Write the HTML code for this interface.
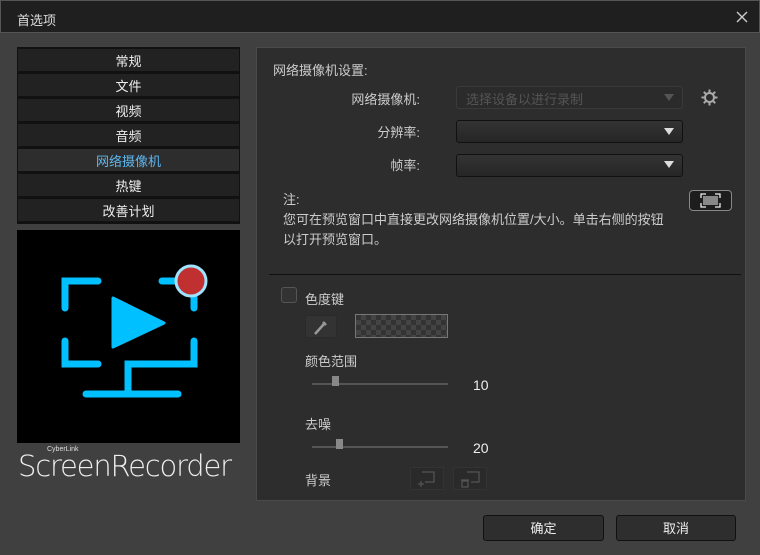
<!DOCTYPE html>
<html><head><meta charset="utf-8"><style>
*{box-sizing:border-box;margin:0;padding:0}
body{width:760px;height:555px;background:#404040;font-family:"Liberation Sans","Noto Sans CJK SC",sans-serif;font-size:13px;color:#d0d0d0;position:relative;overflow:hidden}
.a{position:absolute}
.title{left:0;top:0;width:760px;height:33px;background:#1f1f1f;border:1px solid #555;border-bottom:1px solid #555}
.nav{left:17px;width:223px;height:24px;background:#222;border:1px solid #111;color:#eee;text-align:center;line-height:25px;font-size:13px}
.panel{left:256px;top:47px;width:490px;height:454px;background:#2d2d2d;border:1px solid #4a4a4a}
.sel{height:23px;border:1px solid #111;border-radius:3px;background:linear-gradient(#333,#262626)}
.tri{width:0;height:0;border-left:5px solid transparent;border-right:5px solid transparent;border-top:7px solid #ddd}
.lbl{text-align:right;width:120px;color:#ccc}
.btn{height:26px;border:1px solid #111;border-radius:3px;background:#2e2e2e;color:#eee;text-align:center;line-height:26px}
</style></head><body>
<div class="a title"></div>
<div class="a" style="left:17px;top:10px;color:#ddd;font-size:13px">首选项</div>
<svg class="a" style="left:736px;top:11px" width="12" height="12"><path d="M1 1L11 11M11 1L1 11" stroke="#ccc" stroke-width="1.4"/></svg>
<div class="a" style="left:17px;top:47px;width:223px;height:177px;background:#111"></div>
<div class="a nav" style="top:48px">常规</div>
<div class="a nav" style="top:73px">文件</div>
<div class="a nav" style="top:98px">视频</div>
<div class="a nav" style="top:123px">音频</div>
<div class="a nav" style="top:148px;background:#2d2d2d;color:#5fb6ee">网络摄像机</div>
<div class="a nav" style="top:173px">热键</div>
<div class="a nav" style="top:198px">改善计划</div>
<svg class="a" style="left:17px;top:230px" width="223" height="213" viewBox="17 230 223 213">
<rect x="17" y="230" width="223" height="213" fill="#000"/>
<g stroke="#00c0ff" stroke-width="7" stroke-linecap="round" fill="none">
<path d="M65 308V281H98"/><path d="M162 281H174"/><path d="M194 297V308"/>
<path d="M65 341V364H98"/><path d="M194 341V364H128V394"/><path d="M86 394H178"/>
</g>
<path d="M113 298L164 323L113 347Z" fill="#00c0ff" stroke="#00c0ff" stroke-width="3" stroke-linejoin="round"/>
<circle cx="191" cy="281" r="15" fill="#c03030" stroke="#9ee4ff" stroke-width="3"/>
</svg>
<div class="a" style="left:47px;top:446px;font-size:7px;color:#ddd">CyberLink</div>
<div class="a" style="left:18px;top:449px;font-size:29px;color:#eee;font-family:'DejaVu Sans',sans-serif;letter-spacing:-1.2px;font-weight:300">ScreenRecorder</div>
<div class="a panel"></div>
<div class="a" style="left:273px;top:60px;color:#ccc">网络摄像机设置:</div>
<div class="a lbl" style="left:300px;top:89px">网络摄像机:</div>
<div class="a lbl" style="left:300px;top:122px">分辨率:</div>
<div class="a lbl" style="left:300px;top:155px">帧率:</div>
<div class="a sel" style="left:456px;top:86px;width:227px;border-color:#3a3a3a;background:#2b2b2b"></div>
<div class="a" style="left:466px;top:89px;color:#555">选择设备以进行录制</div>
<div class="a tri" style="left:664px;top:94px;border-top-color:#555"></div>
<svg class="a" style="left:701px;top:89px" width="17" height="17" viewBox="0 0 17 17"><g stroke="#aaa" stroke-width="2" fill="none"><circle cx="8.5" cy="8.5" r="4.5"/><path d="M8.5 0.5v3M8.5 13.5v3M0.5 8.5h3M13.5 8.5h3M2.8 2.8l2.1 2.1M12.1 12.1l2.1 2.1M2.8 14.2l2.1-2.1M12.1 4.9l2.1-2.1"/></g></svg>
<div class="a sel" style="left:456px;top:120px;width:227px"></div>
<div class="a tri" style="left:664px;top:128px"></div>
<div class="a sel" style="left:456px;top:154px;width:227px"></div>
<div class="a tri" style="left:664px;top:161px"></div>
<div class="a" style="left:283px;top:190px;line-height:20px;color:#ccc">注:<br>您可在预览窗口中直接更改网络摄像机位置/大小。单击右侧的按钮<br>以打开预览窗口。</div>
<div class="a" style="left:689px;top:190px;width:43px;height:21px;border:1px solid #888;border-radius:4px;background:#1d1d1d"></div>
<svg class="a" style="left:700px;top:193px" width="21" height="15"><rect x="3" y="3" width="15" height="9" fill="#888"/><path d="M1 5V1h5M15 1h5v4M1 10v4h5M15 14h5v-4" stroke="#eee" stroke-width="1.3" fill="none"/></svg>
<div class="a" style="left:269px;top:274px;width:472px;height:1px;background:#111"></div>
<div class="a" style="left:281px;top:287px;width:16px;height:16px;border:1px solid #555;border-radius:3px;background:#333"></div>
<div class="a" style="left:305px;top:289px;color:#ccc">色度键</div>
<div class="a" style="left:305px;top:315px;width:32px;height:23px;background:#333;border:1px solid #2a2a2a;border-radius:2px"></div>
<svg class="a" style="left:312px;top:318px" width="18" height="18"><path d="M3 16L12 6M11 4l3 3" stroke="#999" stroke-width="2.5"/></svg>
<div class="a" style="left:355px;top:314px;width:93px;height:24px;border:1px solid #777;background-color:#333;background-image:linear-gradient(45deg,#444 25%,transparent 25%,transparent 75%,#444 75%),linear-gradient(45deg,#444 25%,transparent 25%,transparent 75%,#444 75%);background-size:10px 10px;background-position:0 0,5px 5px"></div>
<div class="a" style="left:305px;top:351px;color:#ccc">颜色范围</div>
<div class="a" style="left:312px;top:383px;width:136px;height:2px;background:#555"></div>
<div class="a" style="left:332px;top:376px;width:7px;height:10px;background:#888"></div>
<div class="a" style="left:473px;top:377px;color:#eee;font-size:14px">10</div>
<div class="a" style="left:305px;top:414px;color:#ccc">去噪</div>
<div class="a" style="left:312px;top:446px;width:136px;height:2px;background:#555"></div>
<div class="a" style="left:336px;top:439px;width:7px;height:10px;background:#888"></div>
<div class="a" style="left:473px;top:440px;color:#eee;font-size:14px">20</div>
<div class="a" style="left:305px;top:470px;color:#ccc">背景</div>
<div class="a" style="left:410px;top:467px;width:34px;height:23px;border:1px solid #333;background:#2a2a2a"></div>
<svg class="a" style="left:416px;top:470px" width="24" height="18"><path d="M6 2h12v10H9M5 11v6M2 14h6" stroke="#555" stroke-width="1.2" fill="none"/></svg>
<div class="a" style="left:453px;top:467px;width:34px;height:23px;border:1px solid #333;background:#2a2a2a"></div>
<svg class="a" style="left:459px;top:470px" width="24" height="18"><path d="M8 2h12v10H12M2 10h8M3 11h6v6H3z" stroke="#555" stroke-width="1.2" fill="none"/></svg>
<div class="a btn" style="left:483px;top:515px;width:121px">确定</div>
<div class="a btn" style="left:616px;top:515px;width:120px">取消</div>
</body></html>
